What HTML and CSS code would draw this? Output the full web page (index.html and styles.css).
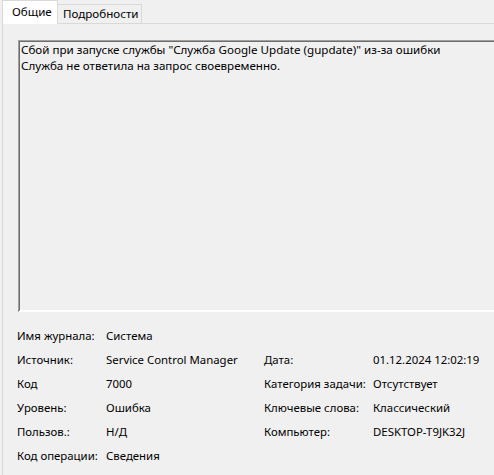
FILE: index.html
```html
<!DOCTYPE html>
<html lang="ru">
<head>
<meta charset="utf-8">
<title>Свойства события</title>
<link rel="stylesheet" href="styles.css">
</head>
<body>
<div class="window">
  <div class="tabs">
    <div class="tab active">Общие</div>
    <div class="tab">Подробности</div>
  </div>
  <div class="panel">
    <div class="msgbox">
      <div>Сбой при запуске службы "Служба Google Update (gupdate)" из-за ошибки</div>
      <div>Служба не ответила на запрос своевременно.</div>
    </div>
    <div class="fields">
      <div class="lbl">Имя журнала:</div><div class="val">Система</div><div></div><div></div>
      <div class="lbl">Источник:</div><div class="val">Service Control Manager</div><div class="lbl">Дата:</div><div class="val">01.12.2024 12:02:19</div>
      <div class="lbl">Код</div><div class="val">7000</div><div class="lbl">Категория задачи:</div><div class="val">Отсутствует</div>
      <div class="lbl">Уровень:</div><div class="val">Ошибка</div><div class="lbl">Ключевые слова:</div><div class="val">Классический</div>
      <div class="lbl">Пользов.:</div><div class="val">Н/Д</div><div class="lbl">Компьютер:</div><div class="val">DESKTOP-T9JK32J</div>
      <div class="lbl">Код операции:</div><div class="val">Сведения</div><div></div><div></div>
    </div>
  </div>
</div>
</body>
</html>
```
FILE: styles.css
```css
html, body {
  margin: 0;
  padding: 0;
  background: #f0f0f0;
  overflow: hidden;
}
body {
  width: 494px;
  height: 475px;
  font-family: "Noto Sans", "Open Sans", sans-serif;
  font-size: 11.4px;
  color: #000;
}
.window {
  display: flex;
  flex-direction: column;
  height: 100%;
}
.tabs {
  display: flex;
  align-items: flex-end;
  height: 23px;
  padding-left: 2px;
  position: relative;
  z-index: 1;
}
.tab {
  height: 19px;
  line-height: 17px;
  padding: 0 4px 0 5px;
  border: 1px solid #d9d9d9;
  border-bottom: none;
  background: #f0f0f0;
  box-sizing: border-box;
  font-size: 11.6px;
}
.tab.active {
  height: 24px;
  line-height: 22px;
  padding: 0 5px 0 9px;
  background: #ffffff;
  margin-bottom: -1px;
  width: 56px;
}
.tab + .tab {
  width: 84px;
  border-left: none;
}
.panel {
  flex: 1;
  margin-left: 2px;
  border-top: 1px solid #d9d9d9;
  border-left: 1px solid #d9d9d9;
  padding: 16px 0 0 15px;
  overflow: hidden;
}
.msgbox {
  height: 272px;
  margin-right: -3px;
  box-sizing: border-box;
  border-style: solid;
  border-width: 2px;
  border-color: #6d6d6d #ffffff #ffffff #6d6d6d;
  padding: 0 0 0 1px;
  line-height: 16px;
  font-size: 11.6px;
  position: relative;
}
.msgbox::before {
  content: "";
  position: absolute;
  left: -2px;
  top: -2px;
  right: 0;
  bottom: 0;
  border-left: 1px solid #a0a0a0;
  border-top: 1px solid #a0a0a0;
  pointer-events: none;
}
.fields {
  display: grid;
  grid-template-columns: 89px 158px 109px auto;
  grid-auto-rows: 24px;
  align-items: center;
  margin-top: 11px;
  margin-left: -1px;
}
.lbl, .val {
  white-space: nowrap;
}
```
